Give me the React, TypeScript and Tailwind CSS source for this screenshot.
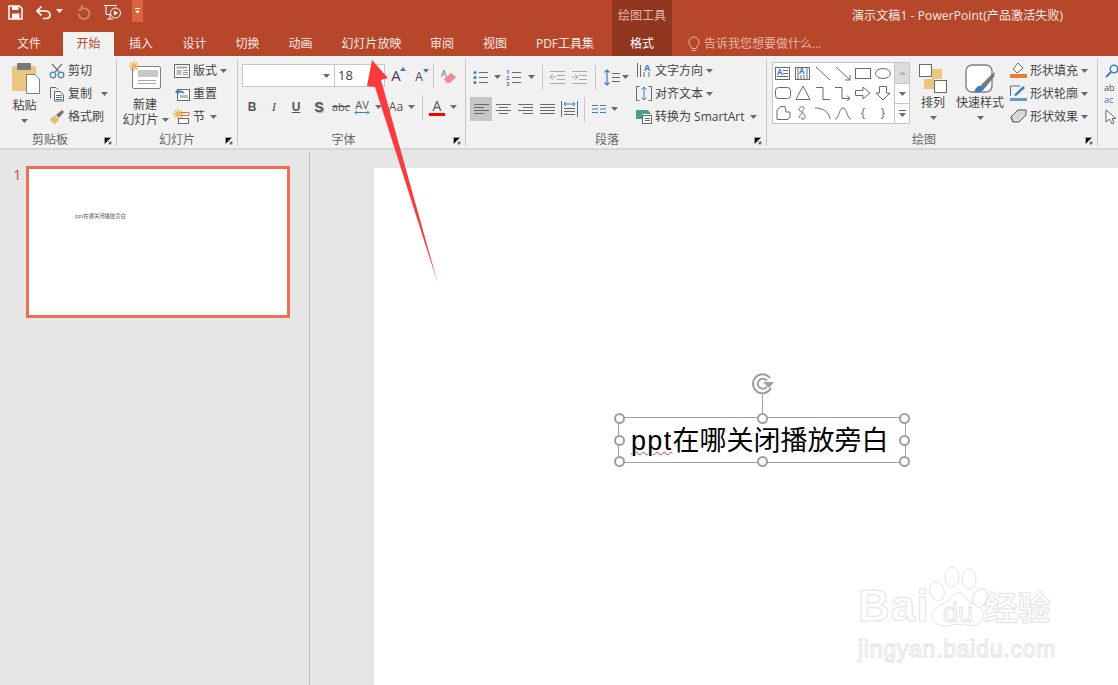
import React from 'react';

const G = '#6a6a6a';
const BLUE = '#3f7cbf';

const Ico = ({ w = 16, h = 16, children, className = '' }: { w?: number; h?: number; children: React.ReactNode; className?: string }) => (
  <svg width={w} height={h} viewBox={`0 0 ${w} ${h}`} fill="none" className={`shrink-0 overflow-visible ${className}`}>
    {children}
  </svg>
);

const Caret = ({ color = G, className = '' }: { color?: string; className?: string }) => (
  <svg width="7" height="4" viewBox="0 0 7 4" className={`shrink-0 ${className}`}>
    <polygon points="0,0 7,0 3.5,4" fill={color} />
  </svg>
);

const Sep = ({ className = '' }: { className?: string }) => <div className={`w-px h-[25px] bg-[#c6c6c6] shrink-0 ${className}`} />;

const Cell = ({ w, children, className = '' }: { w: number; children?: React.ReactNode; className?: string }) => (
  <div style={{ width: w }} className={`h-full flex items-center justify-center shrink-0 ${className}`}>
    {children}
  </div>
);

const Launcher = () => (
  <svg width="8" height="8" viewBox="0 0 8 8" className="absolute right-[4px] bottom-[1px]">
    <path d="M0.5 7V0.5H7" stroke="#a0a0a0" />
    <path d="M3 3L7 7M7 4.5V7H4.5" stroke="#808080" />
  </svg>
);

const Group = ({ width, label, labelPr = 0, launcher = true, children }: { width: number; label: string; labelPr?: number; launcher?: boolean; children: React.ReactNode }) => (
  <div style={{ width }} className="relative h-[87px] shrink-0 border-r border-[#c6c6c6] flex flex-col">
    <div className="h-[71px] flex">{children}</div>
    <div style={{ paddingRight: labelPr }} className="h-[16px] leading-[20px] text-[12px] text-[#666] text-center">{label}</div>
    {launcher && <Launcher />}
  </div>
);

const ToolRow = ({ icon, label, gap = 3 }: { icon: React.ReactNode; label: string; gap?: number }) => (
  <div className="h-[23px] flex items-center text-[12px] text-[#444]">
    {icon}
    <span style={{ marginLeft: gap }} className="whitespace-nowrap">{label}</span>
  </div>
);

const Lines = ({ ys, x1 = 2, x2 = 16, color = G }: { ys: number[]; x1?: number | number[]; x2?: number | number[]; color?: string }) => (
  <>
    {ys.map((y, i) => (
      <line
        key={y}
        x1={Array.isArray(x1) ? x1[i] : x1}
        x2={Array.isArray(x2) ? x2[i] : x2}
        y1={y + 0.5}
        y2={y + 0.5}
        stroke={color}
      />
    ))}
  </>
);

const Sun = ({ x, y }: { x: number; y: number }) => (
  <g stroke="#e9b44c" strokeWidth="1.3">
    <line x1={x - 5} x2={x + 5} y1={y} y2={y} />
    <line x1={x} x2={x} y1={y - 5} y2={y + 5} />
    <line x1={x - 3.5} x2={x + 3.5} y1={y - 3.5} y2={y + 3.5} />
    <line x1={x - 3.5} x2={x + 3.5} y1={y + 3.5} y2={y - 3.5} />
  </g>
);

const shapes: React.ReactNode[] = [
  <><rect x="2.5" y="4.5" width="14" height="12" stroke={G} /><text x="4" y="12" fontSize="8" fontWeight="700" fill={BLUE}>A</text><Lines ys={[7, 10, 13]} x1={[10, 10, 4]} x2={[15, 15, 15]} /></>,
  <><rect x="2.5" y="4.5" width="14" height="12" stroke={G} /><text x="6" y="11" fontSize="8" fontWeight="700" fill={BLUE}>A</text><path d="M5 5v11M8 12v4M11 12v4M14 5v11" stroke={G} /></>,
  <path d="M3 4L17 17" stroke={G} />,
  <path d="M3 4L17 17M17 12V17H12" stroke={G} />,
  <rect x="2.5" y="5.5" width="15" height="10" stroke={G} />,
  <ellipse cx="10" cy="10.5" rx="7.5" ry="5" stroke={G} />,
  <rect x="2.5" y="4.5" width="15" height="11" rx="3" stroke={G} />,
  <path d="M10 3L17 16.5H3Z" stroke={G} />,
  <path d="M3 4.5H10V16.5H17" stroke={G} />,
  <path d="M2 4.5H9V15.5H17M14 12.5L17 15.5L14 18" stroke={G} />,
  <path d="M2.5 7.5H10V4L17 10L10 16V12.5H2.5Z" stroke={G} />,
  <path d="M6.5 3.5H13.5V10H17L10 17L3 10H6.5Z" stroke={G} />,
  <path d="M4 16.5V7L8 3.5H12L13 9H17V14L15 16.5Z" stroke={G} />,
  <path d="M7 15C4 13 9 12 9 10C9 8 5 8 6 6C7 3 11 3 11 5C11 7 8 8 10 10C12 12 13 14 11 16C9 17 8 16 9 14" stroke={G} />,
  <path d="M2 5C9 5 16 8 17 16" stroke={G} />,
  <path d="M2 16C6 16 6 5 10 5C14 5 14 16 18 16" stroke={G} />,
  <text x="10" y="14" textAnchor="middle" fontSize="12" fill={G}>{'{'}</text>,
  <text x="10" y="14" textAnchor="middle" fontSize="12" fill={G}>{'}'}</text>,
];

export default function App() {
  const tabs: [string, number][] = [
    ['插入', 54], ['设计', 53], ['切换', 53], ['动画', 53], ['幻灯片放映', 89], ['审阅', 52], ['视图', 54], ['PDF工具集', 86],
  ];

  return (
    <div className="relative w-[1118px] h-[685px] overflow-hidden bg-[#e6e6e6] font-['Open_Sans','Noto_Sans_CJK_SC',sans-serif]">
      {/* title bar */}
      <div className="h-[32px] bg-[#b7472a] flex text-[12px]">
        <div className="flex h-[22px] items-center">
          <Cell w={30}>
            <Ico w={15} h={15} className="mt-[2px]">
              <path d="M1 1H11.5L14 3.5V14H1Z" stroke="#fff" strokeWidth="1.5" />
              <rect x="4" y="1.5" width="6.5" height="3.5" fill="#fff" />
              <rect x="4" y="8.5" width="7.5" height="5" fill="#fff" />
            </Ico>
          </Cell>
          <Cell w={26}>
            <Ico w={17} h={15} className="mt-[2px]">
              <path d="M2 6H10C13 6 15 7.5 15 10C15 12 13.5 13.5 11 13.5H8" stroke="#fff" strokeWidth="1.7" />
              <path d="M6.5 1.5L2 6L6.5 10.5" stroke="#fff" strokeWidth="1.7" />
            </Ico>
          </Cell>
          <Cell w={7}><Caret color="#fff" /></Cell>
          <Cell w={11} />
          <Cell w={20}>
            <Ico w={14} h={15} className="-scale-x-100 mt-[2px]">
              <path d="M9.5 3.5C5 2.5 1.5 5 1.5 8.5C1.5 11.5 4 14 7 14C10 14 12.5 11.5 12.5 8.5" stroke="#d08a74" strokeWidth="1.7" />
              <path d="M9 0L9.5 5H13" stroke="#d08a74" strokeWidth="1.7" />
            </Ico>
          </Cell>
          <Cell w={38}>
            <Ico w={18} h={16} className="mt-[2px]">
              <path d="M0 1.5H13M2 1.5V10.5H6M9 15H3M6 11V15" stroke="#fff" />
              <circle cx="11.5" cy="9" r="5" stroke="#fff" />
              <polygon points="10,6.5 14,9 10,11.5" fill="#fff" />
            </Ico>
          </Cell>
          <div className="w-[11px] h-[22px] bg-[#db6340] flex flex-col items-center justify-center gap-[1px]">
            <div className="w-[5px] h-px bg-white" />
            <Caret color="#fff" className="scale-75" />
          </div>
        </div>
        <div className="ml-[469px] w-[60px] h-[32px] bg-[#91361f] text-[#e6b5a5] text-center leading-[32px]">绘图工具</div>
        <div className="ml-[180px] h-[32px] leading-[31px] text-[#f8e9e4] whitespace-nowrap tracking-[0.1px]">演示文稿1 - PowerPoint(产品激活失败)</div>
      </div>

      {/* tabs */}
      <div className="h-[24px] bg-[#b7472a] flex text-[12px] text-[#f8e9e4] leading-[24px]">
        <div className="w-[63px] pl-[17px]">文件</div>
        <div className="w-[51px] text-center bg-[#f1f1f1] text-[#b7472a]">开始</div>
        {tabs.map(([t, w]) => (
          <div key={t} style={{ width: w }} className="text-center whitespace-nowrap">{t}</div>
        ))}
        <div className="ml-[4px] w-[60px] bg-[#91361f] text-center text-white">格式</div>
        <div className="ml-[16px] flex items-center text-[#e6b5a5]">
          <Ico w={12} h={16}>
            <path d="M3.5 11C2 9.5 1 8.5 1 6C1 3.2 3.2 1 6 1C8.8 1 11 3.2 11 6C11 8.5 10 9.5 8.5 11V12.5H3.5ZM4 14.5H8" stroke="#e6b5a5" />
          </Ico>
          <span className="ml-[4px] whitespace-nowrap">告诉我您想要做什么...</span>
        </div>
      </div>

      {/* ribbon */}
      <div className="h-[94px] bg-[#f1f1f1] border-b-2 border-[#d6d6d6] pt-[3px] flex">
        <Group width={117} label="剪贴板" labelPr={16}>
          <div className="w-[49px] flex flex-col items-center text-[12px] text-[#444]">
            <Ico w={30} h={33} className="mt-[3px] ml-[2px]">
              <rect x="1" y="4" width="24" height="25" rx="1.5" fill="#ecc67f" />
              <rect x="6" y="1" width="14" height="7" rx="1" fill="#777" />
              <path d="M15.5 12.5H24L28.5 17V31.5H15.5Z" fill="#fff" stroke="#808080" />
            </Ico>
            <span className="mt-[3px] leading-[16px]">粘贴</span>
            <Caret className="mt-[5px]" />
          </div>
          <div>
            <ToolRow label="剪切" icon={
              <Ico><path d="M6 9L13 1M10 9L3 1" stroke="#777" strokeWidth="1.2" /><circle cx="4" cy="12" r="2.8" stroke={BLUE} strokeWidth="1.2" /><circle cx="12" cy="12" r="2.8" stroke={BLUE} strokeWidth="1.2" /></Ico>
            } />
            <div className="flex items-center">
              <ToolRow label="复制" icon={
                <Ico><path d="M1.5 12.5V1.5H7L9 3.5" stroke={G} /><path d="M5.5 5.5H11L14.5 8.5V15H5.5Z" fill="#fff" stroke={G} /><Lines ys={[9, 11, 13]} x1={7} x2={13} color={BLUE} /></Ico>
              } />
              <Caret className="ml-[9px]" />
            </div>
            <ToolRow label="格式刷" icon={
              <Ico><path d="M1 10L6 6L10 11L6 15C4 15 2 12 1 10Z" fill="#e5bd75" /><path d="M7 6L13 1L15 3L10 9Z" fill="#777" /></Ico>
            } />
          </div>
        </Group>

        <Group width={121} label="幻灯片">
          <div className="w-[56px] flex flex-col items-center text-[12px] text-[#444]">
            <Ico w={34} h={30} className="mt-[1px]">
              <rect x="4.5" y="6.5" width="28" height="22" rx="1.5" fill="#fff" stroke="#808080" />
              <rect x="10" y="10" width="20" height="7" fill="#c8c8c8" />
              <Lines ys={[20, 23]} x1={10} x2={28} color="#aaa" />
              <Sun x={6} y={6} />
            </Ico>
            <span className="mt-[7px] leading-[16px]">新建</span>
            <span className="leading-[14px] flex items-center whitespace-nowrap ml-[1px]">幻灯片<Caret className="ml-[3px]" /></span>
          </div>
          <div className="pl-[1px]">
            <div className="flex items-center">
              <ToolRow label="版式" icon={
                <Ico><rect x="0.5" y="1.5" width="15" height="13" fill="#fff" stroke={G} /><rect x="2.5" y="3.5" width="11" height="2" fill="#aaa" /><rect x="2.5" y="7" width="5" height="5" fill="#bbb" /><Lines ys={[7, 9, 11]} x1={9} x2={14} color="#999" /></Ico>
              } />
              <Caret className="ml-[3px]" />
            </div>
            <ToolRow label="重置" icon={
              <Ico><rect x="3.5" y="3.5" width="12" height="11" fill="#fff" stroke={G} /><rect x="6" y="9" width="8" height="3" fill="#bbb" /><path d="M1 6L4.5 2.5V4.5C8 4 10 5 10.5 8C9 6.5 7 6.5 4.5 7V9Z" fill={BLUE} /></Ico>
            } />
            <div className="flex items-center">
              <ToolRow label="节" icon={
                <Ico><Sun x={4} y={5} /><path d="M6.5 3.5H15V6.5H6.5" stroke="#d9743f" /><rect x="4.5" y="9.5" width="10" height="5" fill="#fff" stroke={G} /></Ico>
              } />
              <Caret className="ml-[5px]" />
            </div>
          </div>
        </Group>

        <Group width={228} label="字体" labelPr={16}>
          <div className="pl-[3px] flex flex-col text-[#444]">
            <div className="mt-[5px] h-[23px] flex items-center">
              <div className="ml-px w-[93px] h-[23px] bg-white border border-[#c6c6c6] flex items-center justify-end pr-[4px]"><Caret /></div>
              <div className="w-[50px] h-[23px] bg-white border border-l-0 border-[#c6c6c6] pl-[3px] text-[13px] leading-[21px] text-[#444]">18</div>
              <Cell w={22}>
                <span className="text-[15px] relative">A<Ico w={6} h={4} className="absolute -right-[5px] top-[3px]"><polygon points="0,4 6,4 3,0" fill={BLUE} /></Ico></span>
              </Cell>
              <Cell w={22} className="ml-px">
                <span className="text-[12px] relative mt-[3px]">A<Ico w={6} h={4} className="absolute -right-[6px] top-[1px]"><polygon points="0,0 6,0 3,4" fill={BLUE} /></Ico></span>
              </Cell>
              <Sep className="ml-[3px]" />
              <Cell w={22} className="ml-[4px]">
                <Ico w={16} h={16}>
                  <text x="0" y="9" fontSize="9" fill={G}>A</text>
                  <path d="M3 11L10 5L15 9L9 15H6Z" fill="#e88b9b" />
                </Ico>
              </Cell>
            </div>
            <div className="mt-[8px] h-[24px] flex items-center text-[12px] text-[#555]">
              <Cell w={22} className="font-bold font-['Liberation_Sans',sans-serif]">B</Cell>
              <Cell w={22} className="italic font-['Liberation_Serif',serif] text-[13px]">I</Cell>
              <Cell w={22} className="underline font-bold font-['Liberation_Sans',sans-serif]">U</Cell>
              <Cell w={24} className="font-bold text-[14px] [text-shadow:1px_1px_1px_#aaa] font-['Liberation_Sans',sans-serif]">S</Cell>
              <Cell w={20} className="line-through text-[11px]">abc</Cell>
              <Cell w={22}>
                <div className="flex flex-col items-center leading-[11px] text-[11px]">
                  AV
                  <Ico w={16} h={5}><path d="M1 2.5H15M3 0.5L1 2.5L3 4.5M13 0.5L15 2.5L13 4.5" stroke={BLUE} /></Ico>
                </div>
              </Cell>
              <Cell w={10}><Caret /></Cell>
              <Cell w={22} className="ml-[2px]">Aa</Cell>
              <Cell w={8}><Caret /></Cell>
              <Sep className="ml-[7px]" />
              <Cell w={20} className="ml-[4px]">
                <div className="flex flex-col items-center text-[14px] leading-[15px]">
                  A
                  <div className="w-[16px] h-[3px] bg-[#f00]" />
                </div>
              </Cell>
              <Cell w={8} className="ml-[2px]"><Caret /></Cell>
            </div>
          </div>
        </Group>

        <Group width={301} label="段落" labelPr={18}>
          <div className="w-[170px] flex flex-col">
            <div className="mt-[6px] h-[24px] flex items-center">
              <Cell w={20} className="ml-[4px]">
                <Ico w={15} h={15}>
                  <g fill={BLUE}><circle cx="2" cy="2.5" r="1.5" /><circle cx="2" cy="7.5" r="1.5" /><circle cx="2" cy="12.5" r="1.5" /></g>
                  <Lines ys={[2, 7, 12]} x1={6} x2={15} />
                </Ico>
              </Cell>
              <Cell w={8} className="ml-[3px]"><Caret /></Cell>
              <Cell w={20} className="ml-[3px]">
                <Ico w={16} h={17}>
                  <g fill={BLUE} fontSize="6" fontWeight="700"><text x="0" y="5">1</text><text x="0" y="11">2</text><text x="0" y="17">3</text></g>
                  <Lines ys={[3, 8, 13]} x1={6} x2={15} />
                </Ico>
              </Cell>
              <Cell w={8} className="ml-[3px]"><Caret /></Cell>
              <Sep className="ml-[7px]" />
              <Cell w={20} className="ml-[4px]">
                <Ico w={17} h={13}>
                  <Lines ys={[0, 4, 8, 12]} x1={[1, 8, 8, 1]} x2={16} color="#aaa" />
                  <path d="M1 6H7M4 3L1 6L4 9" stroke="#aaa" />
                </Ico>
              </Cell>
              <Cell w={20} className="ml-[2px]">
                <Ico w={17} h={13}>
                  <Lines ys={[0, 4, 8, 12]} x1={[1, 8, 8, 1]} x2={16} color="#aaa" />
                  <path d="M1 6H7M4 3L7 6L4 9" stroke="#aaa" />
                </Ico>
              </Cell>
              <Sep className="ml-[6px]" />
              <Cell w={20} className="ml-[6px]">
                <Ico w={16} h={17}>
                  <path d="M3 1V16M0.5 3.5L3 1L5.5 3.5M0.5 13.5L3 16L5.5 13.5" stroke={BLUE} strokeWidth="1.2" />
                  <Lines ys={[4, 8, 12]} x1={8} x2={16} />
                </Ico>
              </Cell>
              <Cell w={8} className="-ml-[1px]"><Caret /></Cell>
            </div>
            <div className="mt-[8px] h-[24px] flex items-center pl-[4px]">
              <Cell w={22} className="bg-[#c6c6c6]"><Ico w={15} h={12}><Lines ys={[1, 4, 7, 10]} x1={0} x2={[15, 10, 15, 10]} /></Ico></Cell>
              <Cell w={22}><Ico w={15} h={12}><Lines ys={[1, 4, 7, 10]} x1={[0, 3, 0, 3]} x2={[15, 12, 15, 12]} /></Ico></Cell>
              <Cell w={22}><Ico w={15} h={12}><Lines ys={[1, 4, 7, 10]} x1={[0, 5, 0, 5]} x2={15} /></Ico></Cell>
              <Cell w={22}><Ico w={15} h={12}><Lines ys={[1, 4, 7, 10]} x1={0} x2={15} /></Ico></Cell>
              <Cell w={22}>
                <Ico w={17} h={16}>
                  <path d="M0.5 0V16M16.5 0V16M3 3H14M5 1L3 3L5 5M12 1L14 3L12 5" stroke={BLUE} />
                  <Lines ys={[7, 10, 13]} x1={3} x2={14} />
                </Ico>
              </Cell>
              <Sep className="ml-[4px]" />
              <Cell w={20} className="ml-[4px]">
                <Ico w={14} h={10}><g stroke={BLUE}><path d="M0 1.5H6M8 1.5H14M0 5H6M8 5H14M0 8.5H6M8 8.5H14" /></g></Ico>
              </Cell>
              <Cell w={8} className="ml-[1px]"><Caret /></Cell>
            </div>
          </div>
          <div>
            <div className="flex items-center">
              <ToolRow label="文字方向" icon={
                <Ico w={16} h={17}><text x="8" y="9" fontSize="9" fontWeight="700" fill={BLUE}>A</text><path d="M1.5 1V15M4.5 3V15M13 10V15M8 10V15" stroke={G} /></Ico>
              } />
              <Caret className="ml-[3px]" />
            </div>
            <div className="flex items-center">
              <ToolRow label="对齐文本" icon={
                <Ico w={16} h={17}><path d="M3.5 1.5H0.5V15.5H3.5M12.5 1.5H15.5V15.5H12.5" stroke={G} /><path d="M8 2V15M5.5 4.5L8 2L10.5 4.5M5.5 12.5L8 15L10.5 12.5" stroke={BLUE} /></Ico>
              } />
              <Caret className="ml-[3px]" />
            </div>
            <div className="flex items-center">
              <ToolRow label="转换为 SmartArt" icon={
                <Ico w={16} h={17}><polygon points="0,2 12,2 15,6 6,6 6,11 0,11" fill="#4e9c8d" /><rect x="6.5" y="7.5" width="9" height="8" fill="#fff" stroke={G} /><Lines ys={[10, 12]} x1={9} x2={14} /></Ico>
              } />
              <Caret className="ml-[6px]" />
            </div>
          </div>
        </Group>

        <Group width={331} label="绘图" labelPr={16}>
          <div className="ml-[5px] mt-[3px] w-[138px] h-[62px] flex border border-[#c6c6c6] bg-white shrink-0">
            <div className="w-[121px] grid grid-cols-[repeat(6,20px)] grid-rows-[repeat(3,20px)]">
              {shapes.map((s, i) => <Ico key={i} w={20} h={20}>{s}</Ico>)}
            </div>
            <div className="flex-1 border-l border-[#c6c6c6] flex flex-col">
              <div className="h-[20px] bg-[#dcdcdc] flex items-center justify-center"><Caret color="#b5b5b5" className="rotate-180" /></div>
              <div className="h-[20px] border-t border-[#c6c6c6] flex items-center justify-center"><Caret /></div>
              <div className="flex-1 border-t border-[#c6c6c6] flex flex-col items-center justify-center gap-[2px]">
                <div className="w-[7px] h-px bg-[#666]" />
                <Caret />
              </div>
            </div>
          </div>
          <div className="ml-[4px] w-[38px] flex flex-col items-center text-[12px] text-[#444]">
            <Ico w={28} h={29} className="mt-[5px]">
              <rect x="13" y="5" width="10" height="10" fill="#ecc67f" />
              <rect x="5" y="15" width="10" height="10" fill="#ecc67f" />
              <rect x="0.5" y="0.5" width="12" height="12" fill="#fff" stroke={G} />
              <rect x="15.5" y="16.5" width="12" height="12" fill="#fff" stroke={G} />
            </Ico>
            <span className="mt-[2px] leading-[16px]">排列</span>
            <Caret className="mt-[5px]" />
          </div>
          <div className="ml-[4px] w-[48px] flex flex-col items-center text-[12px] text-[#444]">
            <Ico w={32} h={30} className="mt-[5px] ml-[2px]">
              <rect x="1" y="1" width="26" height="27" rx="6" fill="#fff" stroke="#808080" strokeWidth="1.4" />
              <path d="M16 21L26 11L30 8L29 13L20 24Z" fill="#7a7a7a" />
              <path d="M9 28C11 22 15 20 20 23C19 27 15 29 9 28Z" fill={BLUE} />
            </Ico>
            <span className="mt-[1px] leading-[16px] whitespace-nowrap">快速样式</span>
            <Caret className="mt-[5px]" />
          </div>
          <div className="ml-[6px]">
            <div className="flex items-center">
              <ToolRow label="形状填充" icon={
                <Ico w={17} h={17}><path d="M3 7L8 1L13 6L7 11Z" fill="#fff" stroke={G} /><rect x="0" y="12" width="17" height="4" fill="#ed7d31" /></Ico>
              } />
              <Caret className="ml-[3px]" />
            </div>
            <div className="flex items-center">
              <ToolRow label="形状轮廓" icon={
                <Ico w={17} h={17}><path d="M0.5 11V1H10" stroke={G} /><path d="M4 10L13 1L15 3L6 11Z" fill={BLUE} /><rect x="0" y="13" width="17" height="3" fill="#5b9bd5" /></Ico>
              } />
              <Caret className="ml-[3px]" />
            </div>
            <div className="flex items-center">
              <ToolRow label="形状效果" icon={
                <Ico w={17} h={17}><path d="M1 9L8 2H16V7L9 14H3Z" fill="#d9d9d9" stroke="#555" /><path d="M1 9L3 14" stroke="#555" /></Ico>
              } />
              <Caret className="ml-[3px]" />
            </div>
          </div>
        </Group>

        <div className="ml-[7px] flex flex-col">
          <div className="h-[23px] flex items-center">
            <Ico w={14} h={14}><circle cx="9" cy="5" r="3.8" stroke={BLUE} strokeWidth="1.5" /><path d="M6 8L1 13" stroke={BLUE} strokeWidth="2" /></Ico>
          </div>
          <div className="h-[24px] text-[9px] leading-[12px] text-[#555] -ml-[1px]">
            <div>ab</div>
            <div className="text-[#3f7cbf]">ac</div>
          </div>
          <div className="h-[22px] flex items-center">
            <Ico w={12} h={16}><path d="M1 1V13L4.5 10L7 15L9 14L7 9.5H11Z" fill="#fff" stroke={G} /></Ico>
          </div>
        </div>
      </div>

      {/* work area */}
      <div className="flex h-[535px]">
        <div className="w-[310px] shrink-0 mt-[2px] border-r border-[#bdbdbd] flex items-start pl-[13px] pt-[14px]">
          <div className="w-[13px] text-[15px] leading-[16px] text-[#c8553a]">1</div>
          <div className="w-[264px] h-[152px] bg-white border-[3px] border-[#ef7050] pl-[46px] pt-[43px]">
            <div className="text-[5.3px] leading-[8px] text-[#555] whitespace-nowrap">ppt在哪关闭播放旁白</div>
          </div>
        </div>
        <div className="flex-1 pl-[64px] pt-[18px]">
          <div className="relative w-full h-full bg-white">
            {/* selected text box */}
            <div className="absolute left-[244px] top-[249px] w-[288px] h-[46px] border border-[#a0a0a0] flex items-center pl-[12px]">
              <span className="mt-[2px] text-[27px] leading-[40px] text-black whitespace-nowrap font-['Liberation_Sans','Noto_Sans_CJK_SC',sans-serif]">
                <span className="underline decoration-wavy decoration-[#e23b3b] decoration-1 tracking-[1.3px]">ppt</span>在哪关闭播放旁白
              </span>
              {[
                'left-[-5px] top-[-5px]', 'left-[138px] top-[-5px]', 'right-[-5px] top-[-5px]',
                'left-[-5px] top-[17px]', 'right-[-5px] top-[17px]',
                'left-[-5px] bottom-[-5px]', 'left-[138px] bottom-[-5px]', 'right-[-5px] bottom-[-5px]',
              ].map(p => (
                <div key={p} className={`absolute ${p} w-[11px] h-[11px] rounded-full bg-white border-2 border-[#a0a0a0]`} />
              ))}
              <div className="absolute left-[143px] top-[-24px] w-px h-[20px] bg-[#a0a0a0]" />
              <svg width="26" height="22" viewBox="0 0 26 22" fill="none" className="absolute left-[131px] top-[-45px]">
                <path d="M21 15A9.5 9.5 0 1 1 20 5" stroke="#a0a0a0" strokeWidth="2" />
                <path d="M17 13.5A5 5 0 1 1 17 8" stroke="#a0a0a0" strokeWidth="2" />
                <path d="M13 9H24L19 15Z" fill="#a0a0a0" />
              </svg>
            </div>

            {/* watermark */}
            <div className="absolute left-[484px] top-[397px] w-[200px] text-white font-['Liberation_Sans','Noto_Sans_CJK_SC',sans-serif] [-webkit-text-stroke:1px_#e3e3e3]">
              <div className="flex items-end h-[63px]">
                <span className="text-[44px] leading-[44px] font-bold tracking-[1px]">Bai</span>
                <svg width="60" height="62" viewBox="0 0 60 62" fill="#fff" stroke="#e3e3e3" className="shrink-0 -ml-[1px]">
                  <ellipse cx="9" cy="25" rx="7" ry="10" transform="rotate(-20 9 25)" />
                  <ellipse cx="24" cy="11" rx="7" ry="10" />
                  <ellipse cx="41" cy="13" rx="7" ry="10" />
                  <ellipse cx="52" cy="32" rx="7" ry="10" transform="rotate(25 52 32)" />
                  <path d="M4 48C4 40 18 40 24 30C28 25 34 26 38 32C43 40 56 40 56 48C56 58 46 61 38 59C32 58 26 58 20 60C12 62 4 56 4 48Z" />
                  <text x="30" y="56" textAnchor="middle" fontSize="27">du</text>
                </svg>
                <span className="-ml-[4px] text-[33px] leading-[38px] font-bold whitespace-nowrap">经验</span>
              </div>
              <div className="mt-[8px] text-[23px] leading-[26px] whitespace-nowrap tracking-[0.75px]">jingyan.baidu.com</div>
            </div>
          </div>
        </div>
      </div>

      {/* annotation arrow */}
      <svg width="1118" height="685" viewBox="0 0 1118 685" className="absolute inset-0 pointer-events-none">
        <polygon points="372,60 388,78 381,80 438,284 375,87 367,86" fill="#fb3b3b" />
      </svg>
    </div>
  );
}
